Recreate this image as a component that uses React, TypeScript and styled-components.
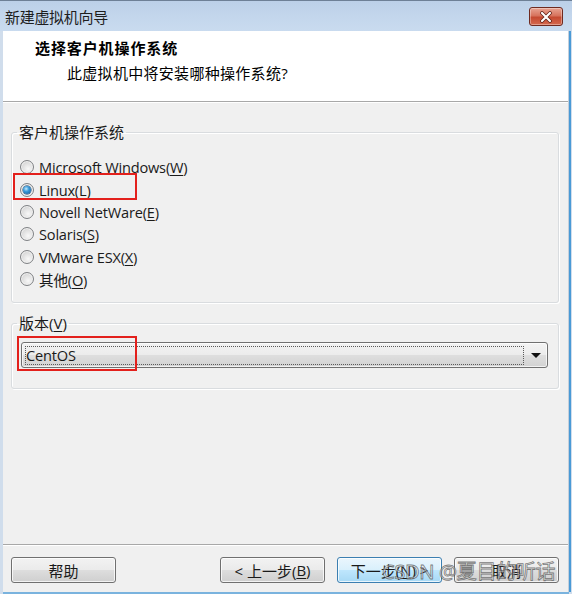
import React from "react";
import styled, { createGlobalStyle } from "styled-components";

const GlobalStyle = createGlobalStyle`
  html, body {
    margin: 0;
    padding: 0;
    background: #ffffff;
  }
  body {
    font-family: "Open Sans", "Noto Sans CJK SC", sans-serif;
    color: #1a1a1a;
  }
`;

const FONT = `"Open Sans", "Noto Sans CJK SC", sans-serif`;

const Window = styled.div`
  position: relative;
  width: 572px;
  height: 594px;
  box-sizing: border-box;
  display: flex;
  flex-direction: column;
  background: linear-gradient(180deg, #bdd1e9 0%, #c8daee 40%, #d3e1f1 100%);
  border-top: 1px solid #6e8096;
  overflow: hidden;
`;

const TitleBar = styled.div`
  height: 30px;
  flex: none;
  display: flex;
  align-items: center;
  justify-content: space-between;
  padding: 0 9px 0 5px;
  background: linear-gradient(180deg, #bcd0e8 0%, #c3d6ec 50%, #c9dbef 100%);
`;

const TitleText = styled.span`
  font-family: ${FONT};
  font-size: 15px;
  color: #1e1e1e;
  letter-spacing: -0.3px;
`;

const CloseButton = styled.div`
  width: 34px;
  height: 19px;
  margin-top: 1px;
  box-sizing: border-box;
  border: 1px solid #6f2a20;
  border-radius: 3px;
  background: linear-gradient(180deg, #e8a493 0%, #d7735d 45%, #c54a31 55%, #d5694e 100%);
  box-shadow: inset 0 0 0 1px rgba(255, 255, 255, 0.35);
  display: flex;
  align-items: center;
  justify-content: center;
`;

const Frame = styled.div`
  flex: 1;
  display: flex;
  padding: 0 0 2px 3px;
  background: #d0ddec;
`;

const Client = styled.div`
  flex: 1;
  display: flex;
  flex-direction: column;
  background: #f0f0f0;
  border-right: 1px solid #c4cfdb;
  box-shadow: 2px 0 0 #4a9ad6, 0 2px 0 #7ab3de;
  margin-right: 3px;
`;

const Header = styled.div`
  height: 71px;
  flex: none;
  box-sizing: border-box;
  background: #ffffff;
  border-bottom: 1px solid #a8a8a8;
  padding: 7px 0 0 32px;
  display: flex;
  flex-direction: column;
`;

const HeaderTitle = styled.div`
  font-family: ${FONT};
  font-size: 15px;
  font-weight: 700;
  letter-spacing: 0.9px;
  line-height: 20px;
  color: #000;
`;

const HeaderSub = styled.div`
  font-family: ${FONT};
  font-size: 15px;
  line-height: 20px;
  margin-top: 5px;
  padding-left: 32px;
  letter-spacing: 0.3px;
  color: #000;
`;

const Body = styled.div`
  flex: 1;
  display: flex;
  flex-direction: column;
  gap: 11px;
  padding: 20px 9px 0 8px;
  border-top: 1px solid #ffffff;
`;

const Group = styled.fieldset<{ $bottom: number }>`
  margin: 0;
  padding: 0 10px ${(p) => p.$bottom}px 8px;
  border: 1px solid #d9dcdf;
  border-radius: 3px;
  box-shadow: inset 1px 1px 0 #ffffff, 1px 1px 0 #ffffff;
  min-width: 0;
`;

const Legend = styled.legend`
  font-family: ${FONT};
  font-size: 15px;
  line-height: 18px;
  padding: 0 2px;
  margin-left: -3px;
  color: #1a1a1a;
`;

const RadioList = styled.div`
  display: flex;
  flex-direction: column;
  padding-top: 15px;
`;

const RadioRow = styled.label`
  position: relative;
  height: 22.4px;
  display: flex;
  align-items: center;
  gap: 5px;
  font-family: ${FONT};
  font-size: 14.6px;
  color: #1a1a1a;
  letter-spacing: -0.2px;
`;

const RadioDot = styled.span<{ $on?: boolean }>`
  position: relative;
  width: 14px;
  height: 14px;
  flex: none;
  box-sizing: border-box;
  border-radius: 50%;
  border: 1px solid #7f8184;
  background: radial-gradient(circle at 60% 65%, #f8f8f8 0%, #dedede 55%, #c4c4c4 100%);
  box-shadow: inset 0 0 0 1px #f2f2f2;
  &::after {
    content: "";
    display: ${(p) => (p.$on ? "block" : "none")};
    position: absolute;
    left: 2px;
    top: 2px;
    width: 8px;
    height: 8px;
    border-radius: 50%;
    background: radial-gradient(circle at 40% 35%, #c6ecff 0%, #3a9ad8 38%, #14548f 100%);
    box-shadow: 0 0 0 0.5px #0f3c68;
  }
`;

const Key = styled.span`
  text-decoration: underline;
  text-underline-offset: 2px;
  text-decoration-thickness: 1px;
`;

const Highlight = styled.span<{ $l: number; $t: number; $w: number; $h: number }>`
  position: absolute;
  left: ${(p) => p.$l}px;
  top: ${(p) => p.$t}px;
  width: ${(p) => p.$w}px;
  height: ${(p) => p.$h}px;
  box-sizing: border-box;
  border: 2px solid #e3201c;
  pointer-events: none;
`;

const Combo = styled.div`
  position: relative;
  margin: 10px 0 0 1px;
  height: 26px;
  box-sizing: border-box;
  border: 1px solid #707070;
  border-radius: 3px;
  background: linear-gradient(180deg, #f3f3f3 0%, #ececec 48%, #dedede 52%, #d2d2d2 100%);
  box-shadow: inset 0 0 0 1px rgba(255, 255, 255, 0.7);
  display: flex;
  align-items: center;
  padding: 0 4px 0 3px;
`;

const ComboFocus = styled.div`
  flex: 1;
  height: 19px;
  box-sizing: border-box;
  border: 1px dotted #5a5a5a;
  display: flex;
  align-items: center;
  padding-left: 0;
  font-family: ${FONT};
  font-size: 14.6px;
  color: #1a1a1a;
  letter-spacing: -0.2px;
`;

const Arrow = styled.span`
  width: 0;
  height: 0;
  margin: 1px 2px 0 7px;
  border-left: 5px solid transparent;
  border-right: 5px solid transparent;
  border-top: 5px solid #111;
`;

const Footer = styled.div`
  flex: none;
  display: flex;
  align-items: flex-start;
  gap: 12px;
  height: 48px;
  box-sizing: border-box;
  border-top: 1px solid #a8a8a8;
  box-shadow: inset 0 1px 0 #ffffff;
  padding: 12px 9px 0 8px;
`;

const Spacer = styled.div`
  flex: 1;
`;

const Button = styled.div<{ $default?: boolean }>`
  width: 105px;
  height: 26px;
  box-sizing: border-box;
  border: 1px solid ${(p) => (p.$default ? "#3c7fb1" : "#707070")};
  border-radius: 3px;
  background: ${(p) =>
    p.$default
      ? "linear-gradient(180deg, #eaf6fd 0%, #d9f0fc 48%, #bee6fd 52%, #a7d9f5 100%)"
      : "linear-gradient(180deg, #f2f2f2 0%, #ebebeb 48%, #dddddd 52%, #cfcfcf 100%)"};
  box-shadow: inset 0 0 0 1px rgba(255, 255, 255, 0.75);
  display: flex;
  align-items: center;
  justify-content: center;
  font-family: ${FONT};
  font-size: 15px;
  color: #1a1a1a;
`;

const Watermark = styled.div`
  position: absolute;
  left: 382px;
  top: 558px;
  font-family: "Noto Sans", "Noto Sans CJK SC", sans-serif;
  font-size: 20px;
  line-height: 26px;
  color: rgba(250, 250, 250, 0.55);
  -webkit-text-stroke: 0.8px rgba(70, 70, 70, 0.7);
  letter-spacing: -0.3px;
  white-space: nowrap;
  pointer-events: none;
`;

const osList: { name: string; key: string; on?: boolean }[] = [
  { name: "Microsoft Windows", key: "W" },
  { name: "Linux", key: "L", on: true },
  { name: "Novell NetWare", key: "E" },
  { name: "Solaris", key: "S" },
  { name: "VMware ESX", key: "X" },
  { name: "其他", key: "O" },
];

export default function App() {
  return (
    <>
      <GlobalStyle />
      <Window>
        <TitleBar>
          <TitleText>新建虚拟机向导</TitleText>
          <CloseButton>
            <svg width="14" height="12" viewBox="0 0 14 12">
              <path
                d="M3 2 L11 10 M11 2 L3 10"
                stroke="#5a1d14"
                strokeWidth="3.6"
                strokeLinecap="round"
              />
              <path
                d="M3 2 L11 10 M11 2 L3 10"
                stroke="#ffffff"
                strokeWidth="2.2"
                strokeLinecap="round"
              />
            </svg>
          </CloseButton>
        </TitleBar>
        <Frame>
          <Client>
            <Header>
              <HeaderTitle>选择客户机操作系统</HeaderTitle>
              <HeaderSub>此虚拟机中将安装哪种操作系统?</HeaderSub>
            </Header>
            <Body>
              <Group $bottom={12}>
                <Legend>客户机操作系统</Legend>
                <RadioList>
                  {osList.map((os) => (
                    <RadioRow key={os.key}>
                      <RadioDot $on={os.on} />
                      <span>
                        {os.name}(<Key>{os.key}</Key>)
                      </span>
                      {os.on && <Highlight $l={-7} $t={-5} $w={124} $h={27} />}
                    </RadioRow>
                  ))}
                </RadioList>
              </Group>
              <Group $bottom={20}>
                <Legend>
                  版本(<Key>V</Key>)
                </Legend>
                <Combo>
                  <ComboFocus>CentOS</ComboFocus>
                  <Arrow />
                  <Highlight $l={-5} $t={-7} $w={120} $h={35} />
                </Combo>
              </Group>
            </Body>
            <Footer>
              <Button>帮助</Button>
              <Spacer />
              <Button>
                &lt; 上一步(<Key>B</Key>)
              </Button>
              <Button $default>
                下一步(<Key>N</Key>) &gt;
              </Button>
              <Button>取消</Button>
            </Footer>
          </Client>
        </Frame>
        <Watermark>CSDN @夏目的听话</Watermark>
      </Window>
    </>
  );
}
